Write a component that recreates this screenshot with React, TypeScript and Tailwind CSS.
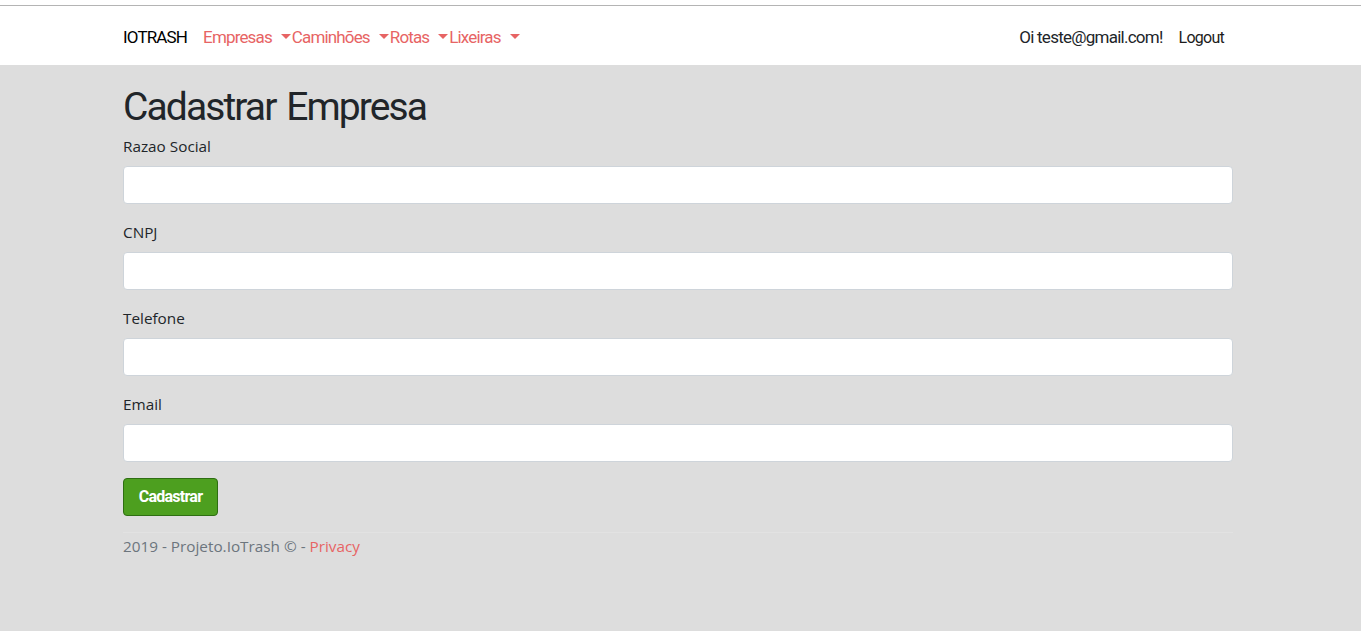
import React from "react";

const narrow = { fontFamily: 'Roboto, "Liberation Sans", sans-serif' };

function Caret() {
  return (
    <span className="inline-block ml-[9px] w-0 h-0 border-l-[5px] border-r-[5px] border-t-[5px] border-l-transparent border-r-transparent border-t-[#e76464] relative top-[-1px]" />
  );
}

function Field({ label }: { label: string }) {
  return (
    <div className="mb-4">
      <label className="block mb-2 text-[15.3px] leading-6 text-[#212529]">{label}</label>
      <input className="block w-full h-[38px] bg-white border border-[#ced4da] rounded-[4px] px-3 outline-none" />
    </div>
  );
}

export default function App() {
  return (
    <div className="min-h-[631px] bg-[#dddddd]" style={{ fontFamily: '"Open Sans", "Noto Sans", sans-serif' }}>
      <div className="h-[5px] bg-white" />
      <div className="h-px bg-[#b4b4b4]" />
      <nav className="bg-white h-[59px]">
        <div className="w-[1110px] ml-[123px] h-full flex items-center justify-between pt-[4px]" style={narrow}>
          <div className="flex items-center text-[17px] tracking-[-0.85px]">
            <span className="text-black mr-4">IOTRASH</span>
            {["Empresas", "Caminhões", "Rotas", "Lixeiras"].map((t) => (
              <span key={t} className="text-[#e76464] flex items-center mr-[1px]">
                {t}
                <Caret />
              </span>
            ))}
          </div>
          <div className="flex items-center text-[17px] tracking-[-0.75px] text-[#212529] pr-[9px]">
            <span>Oi teste@gmail.com!</span>
            <span className="ml-4 text-[16px] text-[#1c1c1c]">Logout</span>
          </div>
        </div>
      </nav>
      <main className="w-[1110px] ml-[123px]">
        <h1 className="mt-[18px] mb-[3px] text-[39px] leading-[48px] tracking-[-1.9px] [word-spacing:3px] text-[#212529]" style={narrow}>
          Cadastrar Empresa
        </h1>
        <Field label="Razao Social" />
        <Field label="CNPJ" />
        <Field label="Telefone" />
        <Field label="Email" />
        <button
          className="h-[38px] w-[95px] bg-[#4d9f1f] border border-[#2e6e12] rounded-[4px] text-white font-bold text-[16px] tracking-[-0.75px]"
          style={narrow}
        >
          Cadastrar
        </button>
        <footer className="mt-4 border-t border-[#e2e2e2] pt-[1px] text-[15.3px] leading-[24px] text-[#6c757d]">
          2019 - Projeto.IoTrash © - <span className="text-[#e76464]">Privacy</span>
        </footer>
      </main>
    </div>
  );
}
